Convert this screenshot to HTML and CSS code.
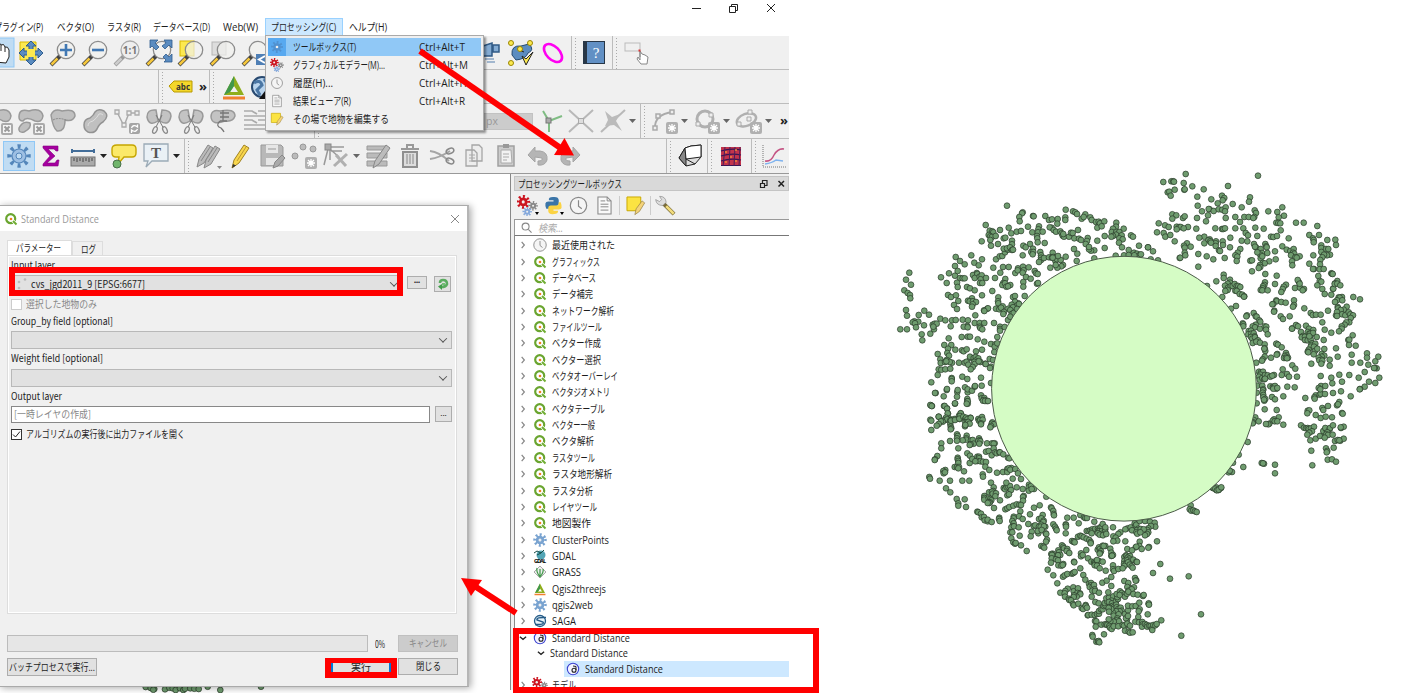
FILE: index.html
```html
<!DOCTYPE html>
<html lang="ja">
<head>
<meta charset="utf-8">
<title>Standard Distance</title>
<link rel="stylesheet" href="styles.css">
</head>
<body>
<svg class="defs" width="0" height="0">
<defs>
<symbol id="hand" viewBox="-16 -16 32 32"><rect x="-16" y="-15" width="31" height="29" fill="#c0dcf3" stroke="#90c8f6"/><path d="M-4 9L-11 0V-5Q-9-6-7-3L-6-1V-9Q-4-12-2-9Q0-12 2-8Q5-10 6-6Q9-7 10-3V4L7 10Z" fill="#fff" stroke="#222"/><path d="M-2-9V-2M2-8V-2M6-6V-1" stroke="#222"/></symbol>
<symbol id="pan" viewBox="-16 -16 32 32"><path d="M-11-11H5V7H-11Z" fill="#fce94f" stroke="#d8b800"/><path d="M0-12 L5-7H2V-2H7V-5L12 0L7 5V2H2V7H5L0 12L-5 7H-2V2H-7V5L-12 0L-7-5V-2H-2V-7H-5Z" fill="#5b8cc0" stroke="#2d5c8e"/><rect x="-4" y="-4" width="8" height="8" fill="#fce94f"/></symbol>
<symbol id="lens" viewBox="-16 -16 32 32"><path d="M-3 3L-12 12" stroke="#444" stroke-width="4"/><path d="M-5.500 5.500L-11.500 11.500" stroke="#f5c73d" stroke-width="2.500"/><circle cx="3" cy="-3" r="8.700" fill="#f1f1ee" fill-opacity=".7" stroke="#8c8c8c" stroke-width="1.300"/></symbol>
<symbol id="zin" viewBox="-16 -16 32 32"><use href="#lens" x="-16" y="-16" width="32" height="32"/><path d="M3-9V3M-3-3H9" stroke="#4178b3" stroke-width="2.600"/></symbol>
<symbol id="zout" viewBox="-16 -16 32 32"><use href="#lens" x="-16" y="-16" width="32" height="32"/><path d="M-3-3H9" stroke="#4178b3" stroke-width="2.600"/></symbol>
<symbol id="z11" viewBox="-16 -16 32 32"><path d="M-3 3L-12 12" stroke="#999" stroke-width="4"/><path d="M-5.500 5.500L-11.500 11.500" stroke="#ccc" stroke-width="2.500"/><circle cx="3" cy="-3" r="9" fill="#eee" stroke="#aaa" stroke-width="1.300"/><text x="3" y="1" text-anchor="middle" font-size="10" font-weight="bold" fill="#777">1:1</text></symbol>
<symbol id="zfull" viewBox="-16 -16 32 32"><use href="#lens" x="-16" y="-16" width="32" height="32"/><path d="M-9-13H-1L-4-10L0-6L-3-3L-7-7L-9-5ZM13-13V-5L10-8L6-4L3-7L7-10L5-13ZM13 9V1L10 4L7 1L4 4L7 7L5 9Z" fill="#5b8cc0" stroke="#2d5c8e" stroke-width=".8"/></symbol>
<symbol id="zsel" viewBox="-16 -16 32 32"><rect x="-11" y="-12" width="14" height="15" fill="#fce94f" stroke="#d8b800"/><use href="#lens" x="-16" y="-16" width="32" height="32"/></symbol>
<symbol id="zlay" viewBox="-16 -16 32 32"><rect x="-11" y="-11" width="14" height="13" fill="#ddd" stroke="#b5b5b5"/><use href="#lens" x="-16" y="-16" width="32" height="32"/></symbol>
<symbol id="zlast" viewBox="-16 -16 32 32"><use href="#lens" x="-16" y="-16" width="32" height="32"/><rect x="1" y="1" width="13" height="11" fill="#4f7fb5"/><path d="M10 3L4 6.500L10 10" stroke="#fff" stroke-width="2" fill="none"/></symbol>
<symbol id="scope" viewBox="-16 -16 32 32"><path d="M-6-7L3-10V3L-6 3ZM4-8H10V-1H4Z" fill="#83abd3" stroke="#315b87" stroke-width="1.500"/><path d="M-4 6H5M-2 9H6" stroke="#547ead"/></symbol>
<symbol id="nodes" viewBox="-16 -16 32 32"><path d="M-9 2Q-10-8 0-7L8-9Q14-3 7 0Q5 6-5 7Z" fill="#5b8cc0" stroke="#23496f"/><path d="M-2-3L3-1" stroke="#222"/><g fill="#fce94f" stroke="#9a8500"><circle cx="-10" cy="-10" r="2.500"/><circle cx="9" cy="-10" r="2.500"/><circle cx="-1" cy="-4" r="2.500"/><circle cx="-10" cy="10" r="2.500"/><path d="M1 3L5 6L12-1L5 12Z" stroke="#222"/></g></symbol>
<symbol id="oval" viewBox="-16 -16 32 32"><ellipse rx="11" ry="6.500" transform="rotate(45)" fill="none" stroke="#ff00f2" stroke-width="2.600"/></symbol>
<symbol id="book" viewBox="-16 -16 32 32"><rect x="-11" y="-12" width="22" height="23" fill="#283747"/><rect x="-7" y="-11" width="17" height="21" fill="#6290c4"/><text x="2" y="5" text-anchor="middle" font-size="15" fill="#fff" class="serif">?</text></symbol>
<symbol id="recthand" viewBox="-16 -16 32 32"><rect x="-10" y="-10" width="15" height="8" fill="none" stroke="#bbb"/><path d="M5-2V4M5-2V7L3 4L2 6L6 11H12L13 4L10 2L7 1Z" fill="#fff" stroke="#888"/><path d="M3.500-3.500h2v2h-2z" fill="#d33"/></symbol>
<symbol id="tag" viewBox="-16 -16 32 32"><path d="M-12-1L-7-6H11V5H-7Z" fill="#f4d72a" stroke="#b99a00"/><text x="2" y="3" text-anchor="middle" font-size="8" font-weight="bold" fill="#333">abc</text></symbol>
<symbol id="tri" viewBox="-16 -16 32 32"><path d="M0-11L10 8H-10ZM0-1L-4 5H4Z" fill="#8fae1d" fill-rule="evenodd"/><path d="M0-11L-10 8L-4 5L0-1Z" fill="#42984a"/><path d="M-11 11H11" stroke="#f08030" stroke-width="3"/></symbol>
<symbol id="globe" viewBox="-16 -16 32 32"><circle r="10" fill="#b9d4ed" stroke="#284970" stroke-width="2"/><path d="M-8-4Q-2-8 0-2L-5 3L-2 8M2-8L8 0" stroke="#4a76a4" stroke-width="3" fill="none"/><path d="M-3 12L6 0L11 12Z" fill="#111"/></symbol>
<symbol id="blobx" viewBox="-16 -16 32 32"><path d="M-12-4Q-12-13-2-10Q10-14 12-5Q11 2 4 0Q-5-5-8 0Q-12 0-12-4ZM-12 7Q-8-1-1 2Q1 7-7 11Q-13 12-12 7Z" fill="#c0c0c0" stroke="#999" stroke-width="1.500"/><rect x="3" y="3" width="10" height="10" rx="1" fill="#f5f5f5" stroke="#aaa" stroke-width="2"/><path d="M5.500 5.500L10.500 10.500M10.500 5.500L5.500 10.500" stroke="#999" stroke-width="2"/></symbol>
<symbol id="blob2" viewBox="-16 -16 32 32"><path d="M-12-6Q-9-13-1-10Q12-13 12-5Q10 1 2-1Q2 11-6 10Q-10 7-12-6Z" fill="#c0c0c0" stroke="#999" stroke-width="1.500"/><path d="M-10-1Q-5-4 3-1" stroke="#888" stroke-dasharray="2 1" fill="none"/></symbol>
<symbol id="bean" viewBox="-16 -16 32 32"><path d="M-11 4Q-11-2-5-3Q-1-6 0-9Q3-13 9-10Q15-5 8 1Q4 3 2 8Q-1 13-7 11Q-11 9-11 4Z" fill="#c0c0c0" stroke="#929292" stroke-width="1.500"/><path d="M-7 5Q-7 1-2 0Q2-3 4-7Q6-8 8-6" stroke="#dedede" fill="none"/></symbol>
<symbol id="vnode" viewBox="-16 -16 32 32"><path d="M-10-9L-3 5L2-8H11" stroke="#aaa" stroke-width="1.500" fill="none"/><g fill="#eee" stroke="#aaa" stroke-width="1.300"><path d="M-12-11h4v4h-4zM-5 2h4v4h-4zM0-10h4v4h-4zM8-10h4v4h-4z"/></g><rect x="2" y="2" width="11" height="11" rx="2" fill="#a5a5a5"/><path d="M4.500 7Q6 3 10.500 6V3.500M10.500 8Q9 12 4.500 9V12" stroke="#fff" stroke-width="1.300" fill="none"/></symbol>
<symbol id="split" viewBox="-16 -16 32 32"><path d="M-12-4Q-12-12-3-11L-1 0Q-10 6-12-4ZM12-5Q12-11 3-11L1 0Q10 6 12-5Z" fill="#c3c3c3" stroke="#999" stroke-width="1.500"/><path d="M-3-6L5 8M3-6L-4 8" stroke="#777"/><ellipse cx="-4" cy="9" rx="2" ry="3.500" fill="#eee" stroke="#888" stroke-width="1.300" transform="rotate(25 -4 9)"/><ellipse cx="6" cy="9" rx="2" ry="3.500" fill="#eee" stroke="#888" stroke-width="1.300" transform="rotate(-25 6 9)"/></symbol>
<symbol id="merge" viewBox="-16 -16 32 32"><path d="M-12-4Q-12-12-3-10Q12-13 12-5Q10 1 2 0Q-11 5-12-4Z" fill="#c3c3c3" stroke="#999" stroke-width="1.500"/><path d="M-3-8H6M-3-4H6M-3 0H4M0-11V0M-3 0Q-8 5-2 7Q0 9 1 11" stroke="#777" fill="none" stroke-width="1.300"/></symbol>
<symbol id="cut3" viewBox="-16 -16 32 32"><path d="M-11-10H-3L2-7M3-10H12M-11-5H12M-11-1H-3L2 2M3-1H12M-11 4H12M-11 8H12" stroke="#aaa" stroke-width="1.700" fill="none"/></symbol>
<symbol id="red" viewBox="-16 -16 32 32"><circle r="10" fill="#b00010"/></symbol>
<symbol id="topo" viewBox="-16 -16 32 32"><path d="M-6-10L0 0L13-5M0 0V11" stroke="#80bd84" stroke-width="2" fill="none"/><rect x="-3" y="-3" width="5" height="5" fill="#aaa" stroke="#777"/></symbol>
<symbol id="cross" viewBox="-16 -16 32 32"><path d="M-12-11L12 11M12-11L-12 11" stroke="#b8b8b8" stroke-width="2"/><rect x="-2.500" y="-2.500" width="5" height="5" fill="#ddd" stroke="#aaa"/></symbol>
<symbol id="cross2" viewBox="-16 -16 32 32"><path d="M-12 11L12-11" stroke="#b8b8b8" stroke-width="2" fill="none"/><path d="M-8-10L-1-4L7-7L3 0L9 10L1 4L-8 5L-5-1Z" fill="#bbb"/></symbol>
<symbol id="star" viewBox="-16 -16 32 32"><rect x="1" y="1" width="12" height="12" rx="2" fill="#b0b0b0"/><path d="M7 3V11M3 7H11M4 4L10 10M10 4L4 10" stroke="#fff" stroke-width="1.300"/></symbol>
<symbol id="curve" viewBox="-16 -16 32 32"><path d="M-10 8Q-11-7 8-9" stroke="#aaa" stroke-width="1.800" fill="none"/><path d="M-12 5h4v4h-4zM-9-7h4v4h-4zM5-11h4v4h-4z" fill="#eee" stroke="#aaa" stroke-width="1.500"/><use href="#star" x="-16" y="-16" width="32" height="32"/></symbol>
<symbol id="ring" viewBox="-16 -16 32 32"><circle cx="-2" cy="-2" r="8" fill="none" stroke="#b0b0b0" stroke-width="3"/><path d="M-11 1h4v4h-4zM2-8h4v4h-4z" fill="#eee" stroke="#aaa"/><use href="#star" x="-16" y="-16" width="32" height="32"/></symbol>
<symbol id="ellip" viewBox="-16 -16 32 32"><ellipse cx="-2" cy="-2" rx="10" ry="6" fill="none" stroke="#b0b0b0" stroke-width="2.500" transform="rotate(-20)"/><path d="M-12 1h4v4h-4zM-2-4h4v4h-4zM-1-11h4v4h-4z" fill="#eee" stroke="#aaa"/><use href="#star" x="-16" y="-16" width="32" height="32"/></symbol>
<symbol id="gear" viewBox="-16 -16 32 32"><circle r="10" fill="none" stroke="currentColor" stroke-width="7" stroke-dasharray="3.600 4.254" transform="rotate(-10)"/><circle r="8.500" fill="currentColor"/><circle r="3" class="hole"/></symbol>
<symbol id="geartool" viewBox="-16 -16 32 32"><rect x="-15.500" y="-14.500" width="31" height="29" fill="#c0dcf3" stroke="#90c8f6"/><circle r="9.500" fill="none" stroke="#5486ba" stroke-width="4.500" stroke-dasharray="3 4.461" transform="rotate(-10)"/><circle r="7" fill="#9dbfe3" stroke="#5486ba" stroke-width="1.200"/><circle r="3" fill="#c0dcf3" stroke="#5486ba"/></symbol>
<symbol id="sigma" viewBox="-16 -16 32 32"><path d="M-8-10H7V-5H5L3-7H-3L4 0L-4 7H4L6 4H8L7 10H-8V8L-1 0L-8-8Z" fill="#a5009f" stroke="#850082" stroke-width=".6"/></symbol>
<symbol id="ruler" viewBox="-16 -16 32 32"><path d="M-11-5H11M-11-7V-3M11-7V-3" stroke="#426d99" stroke-width="2"/><rect x="-12" y="1" width="24" height="9" fill="#aaa" stroke="#707070"/><path d="M-9 2V5M-6 2V6M-3 2V5M0 2V6M3 2V5M6 2V6M9 2V5" stroke="#444"/></symbol>
<symbol id="tip" viewBox="-16 -16 32 32"><path d="M-7-11H8Q12-11 12-7V-3Q12 1 8 1H0L-6 8L-5 1H-8Q-12 1-12-3V-7Q-12-11-7-11Z" fill="#fbe969" stroke="#c5a500" stroke-width="1.400"/><circle cx="-7" cy="8" r="4" fill="#70b56c" stroke="#48704a"/></symbol>
<symbol id="textbox" viewBox="-16 -16 32 32"><path d="M-12-12H12V5H-4L-10 11L-8 5H-12Z" fill="#eaf1f6" stroke="#9baab6" stroke-width="1.300"/><text y="2" text-anchor="middle" font-size="15" font-weight="bold" class="serif" fill="#555">T</text></symbol>
<symbol id="pencils" viewBox="-16 -16 32 32"><g fill="#bbb" stroke="#888"><path d="M-11 11L-9 3L0-11L5-8L-4 7Z"/><path d="M-4 12L-2 4L7-10L12-7L3 8Z"/></g><path d="M-7 5L2-9M0 6L9-8" stroke="#888"/><path d="M9 10h5l-2.500 3z" fill="#888"/></symbol>
<symbol id="pencil" viewBox="-16 -16 32 32"><path d="M-8 12L-6 4L4-11L9-8L-1 7Z" fill="#f8d64c" stroke="#a08222"/><path d="M-3 5L6-9" stroke="#bc9934"/><path d="M-8 12L-7 8L-4 9.500Z" fill="#333"/></symbol>
<symbol id="gpencil" viewBox="-16 -16 32 32"><path d="M-5 12L-3 5L8-11L12-8L1 8Z" fill="#bcbcbc" stroke="#888"/></symbol>
<symbol id="save" viewBox="-16 -16 32 32"><path d="M-11-11H9L11-9V10H-11Z" fill="#b8b8b8" stroke="#999"/><path d="M-6-11H6V-3H-6ZM-6 2H6V9H-6Z" fill="#e6e6e6"/><path d="M-4-7H4" stroke="#999"/><path d="M1 12L3 6L10-1L13 2L6 10Z" fill="#aaa" stroke="#888"/></symbol>
<symbol id="points" viewBox="-16 -16 32 32"><g fill="#bbb" stroke="#999"><circle cx="-1" cy="-9" r="3"/><circle cx="-9" cy="0" r="3"/><circle cx="9" cy="-7" r="3"/></g><use href="#star" x="-16" y="-16" width="32" height="32"/></symbol>
<symbol id="vertex" viewBox="-16 -16 32 32"><path d="M-9-9H8M-5-5H6M-8-7L-12 9M-6-7V4M-5-6L3 1" stroke="#999" stroke-width="1.500"/><rect x="-11" y="-12" width="6" height="6" fill="#aaa" stroke="#888"/><path d="M-2 10L11-2M0-1L10 10" stroke="#b0b0b0" stroke-width="3"/></symbol>
<symbol id="table" viewBox="-16 -16 32 32"><path d="M-11-10H9V-6H-11ZM-11-3H9V2H-11ZM-11 5H9V10H-11Z" fill="#bbb" stroke="#999"/><use href="#gpencil" x="-16" y="-16" width="32" height="32"/></symbol>
<symbol id="trash" viewBox="-16 -16 32 32"><path d="M-9-7H9M-3-8V-11H3V-8" stroke="#999" stroke-width="2" fill="none"/><path d="M-7-4H7V11H-7Z" fill="#ddd" stroke="#8f8f8f" stroke-width="2"/><path d="M-3-2V8M0-2V8M3-2V8" stroke="#888"/></symbol>
<symbol id="sciss" viewBox="-16 -16 32 32"><path d="M-12-5Q-3-4 7 5M-12 3Q-3 2 8-5" stroke="#a5a5a5" stroke-width="2" fill="none"/><ellipse cx="8" cy="-5" rx="4" ry="2.500" transform="rotate(-25 8 -5)" fill="none" stroke="#888" stroke-width="1.500"/><ellipse cx="8" cy="5" rx="4" ry="2.500" transform="rotate(25 8 5)" fill="none" stroke="#888" stroke-width="1.500"/></symbol>
<symbol id="copy" viewBox="-16 -16 32 32"><path d="M-2-11H5L8-8V5H-2ZM-8-6H0L3-3V10H-8Z" fill="#ededed" stroke="#a5a5a5" stroke-width="1.300"/><path d="M-5-1H1M-5 2H1M-5 5H1" stroke="#aaa"/></symbol>
<symbol id="paste" viewBox="-16 -16 32 32"><path d="M-8-10H8V10H-8Z" fill="#ccc" stroke="#a0a0a0" stroke-width="1.500"/><path d="M-5-6H5L6 7H-5Z" fill="#f2f2f2" stroke="#aaa"/><path d="M-3-12H3V-8H-3Z" fill="#999"/><path d="M-3-2H3M-3 1H3M-3 4H1" stroke="#aaa"/></symbol>
<symbol id="undo" viewBox="-16 -16 32 32"><path d="M-10-1L-3-9V-5H2Q10-4 9 4Q7 10 0 9V5Q5 5 4 2L-3 1V6Z" fill="#b5b5b5" stroke="#a5a5a5"/></symbol>
<symbol id="redo" viewBox="-16 -16 32 32"><path d="M10-1L3-9V-5H-2Q-10-4-9 4Q-7 10 0 9V5Q-5 5-4 2L3 1V6Z" fill="#b5b5b5" stroke="#a5a5a5"/></symbol>
<symbol id="cube" viewBox="-16 -16 32 32"><path d="M-5-8L1-10L11-11V1L5 8L-4 10L-11 2Z" fill="#ddd" stroke="#222"/><path d="M-5-8L-4 3L-4 10L-11 2Z" fill="#888" stroke="#222"/><path d="M-5-8L1-10L11-11V1L-4 3Z" fill="#fff" stroke="#222"/><path d="M-4 3L5 8" stroke="#222"/></symbol>
<symbol id="raster" viewBox="-16 -16 32 32"><rect x="-10" y="-9" width="20" height="19" fill="#c2334c"/><path d="M-10-5Q0-8 10-6M-10 0Q0-3 10-1M-10 5Q0 2 10 4M-10 9.500H10" stroke="#3a1454" stroke-width="1.200" fill="none"/><path d="M-6-9L-8 10M-1-9L-2 10M4-9L3 10M9-9L8 10" stroke="#47205a"/><path d="M-5-5V-3M0 0V2M5-7V-5M-5 5V7M5 4V6" stroke="#f18b36" stroke-width="1.500"/></symbol>
<symbol id="chart" viewBox="-16 -16 32 32"><path d="M-11-11V11H12" stroke="#777" stroke-dasharray="1 1" fill="none"/><path d="M-9 5Q-3 6 0-1Q4-8 10-7" stroke="#c45484" stroke-width="1.500" fill="none"/><path d="M-9 8Q-2 7 2 4L9 5" stroke="#7eb3ef" stroke-width="1.500" fill="none"/></symbol>
<symbol id="q" viewBox="-8 -8 16 16"><circle cx="-.3" cy="-.3" r="4.500" fill="none" stroke="#6aa52f" stroke-width="2.200"/><path d="M1.500 1.500L5.500 5.500" stroke="#fff" stroke-width="3.200"/><path d="M2 2L5.500 5.500" stroke="#70ae32" stroke-width="1.900"/><circle r="1.300" fill="#ed7f22"/></symbol>
<symbol id="clock" viewBox="-16 -16 32 32"><circle r="12.500" fill="#f5f5f5" stroke="#888" stroke-width="1.800"/><path d="M0-8V1L5 5" stroke="#888" stroke-width="1.800" fill="none"/></symbol>
<symbol id="doc" viewBox="-16 -16 32 32"><path d="M-10-13H4L10-7V13H-10Z" fill="#f9f9f9" stroke="#888" stroke-width="1.600"/><path d="M4-13V-7H10M-6-7H1M-6-2H6M-6 2H6M-6 7H6" stroke="#888" stroke-width="1.500" fill="none"/></symbol>
<symbol id="note" viewBox="-16 -16 32 32"><path d="M-13-13H8V4L3 8H-13Z" fill="#fbe342" stroke="#caa900" stroke-width="1.500"/><path d="M-1 14L1 5L10-7L14-4L6 9Z" fill="#f4d37a" stroke="#8e7a40"/></symbol>
<symbol id="gears" viewBox="-16 -16 32 32"><g color="#cc1520"><use href="#gear" x="-19" y="-18" width="25" height="25"/></g><g color="#888"><use href="#gear" x="0" y="-8" width="17" height="17"/></g><g color="#85a9dc"><use href="#gear" x="-9" y="1" width="17" height="17"/></g></symbol>
<symbol id="py" viewBox="-16 -16 32 32"><path d="M-1-13Q8-14 8-8V-2Q8 1 4 1H-4Q-7 1-7 5H-11Q-15-6-8-6H0V-8H-7Q-8-13-1-13Z" fill="#3b75a8"/><path d="M1 13Q-8 14-8 8V4Q-8 0-4 0H4Q8 0 8-5H11Q15 6 8 6H0V8H7Q7 13 1 13Z" fill="#fbd343"/></symbol>
<symbol id="wrench" viewBox="-16 -16 32 32"><path d="M-3-3L13 13" stroke="#786b38" stroke-width="6"/><path d="M1 1L12.500 12.500" stroke="#f2dc7c" stroke-width="4"/><path d="M-15-9L-9-6L-6-9L-9-14Q0-14 1-5L-4 0Q-14 0-15-9Z" fill="#ddd" stroke="#888"/></symbol>
<symbol id="gdal" viewBox="-8 -8 16 16"><circle cx="1" cy="-1" r="4.500" fill="#52a5b5"/><path d="M-6-3L-3-5L1-3L4-6M-3-1L1-3" stroke="#174b47" fill="none"/><text y="6.500" text-anchor="middle" font-size="5.500" font-weight="bold" textLength="12">GDAL</text></symbol>
<symbol id="grass" viewBox="-8 -8 16 16"><path d="M0-6L6 0L0 6L-6 0Z" fill="#eee" stroke="#aaa"/><path d="M0 5Q-4 0-3-4M0 5V-3M0 5Q4 0 3-3" stroke="#3c9645" stroke-width="1.200" fill="none"/></symbol>
<symbol id="saga" viewBox="-8 -8 16 16"><circle r="5.500" fill="#e8f3fa" stroke="#245b87" stroke-width="1.300"/><path d="M6-3.500Q-4-4-3-1L3 1Q5 4-5 3.500" stroke="#245b87" stroke-width="1.400" fill="none"/></symbol>
<symbol id="sd" viewBox="-8 -8 16 16"><circle r="5.700" fill="#f4f4ff" stroke="#3b42cf" stroke-width="1.100"/><circle cx="1" cy="1.200" r="2" fill="none" stroke="#222" stroke-width="1.100"/><path d="M0-3L3-2.500V1" stroke="#222" fill="none"/></symbol>
</defs>
</svg>

<div class="page">
<div class="app">
  <div class="titlebar">
    <svg width="100" height="16" viewBox="0 0 100 16" fill="none" stroke="#222"><path d="M6 8.500H15M43.500 6.500H49.500V12.500H43.500ZM45.500 6V4.500H51.500V10.500H50M81 4L89 12M89 4L81 12"/></svg>
  </div>
  <div class="menubar">
    <span class="m1"><b data-w="49">プラグイン(P)</b></span><span class="m2"><b data-w="37">ベクタ(O)</b></span><span class="m3"><b data-w="34">ラスタ(R)</b></span><span class="m4"><b data-w="57">データベース(D)</b></span><span class="m5"><b data-w="35">Web(W)</b></span><span class="m6 open"><b data-w="65">プロセッシング(C)</b></span><span class="m7"><b data-w="38">ヘルプ(H)</b></span>
  </div>
  <div class="bar row1">
    <svg class="ic"><use href="#hand"/></svg><svg class="ic"><use href="#pan"/></svg><svg class="ic"><use href="#zin"/></svg><svg class="ic"><use href="#zout"/></svg><svg class="ic"><use href="#z11"/></svg><svg class="ic"><use href="#zfull"/></svg><svg class="ic"><use href="#zsel"/></svg><svg class="ic"><use href="#zlay"/></svg><svg class="ic"><use href="#zlast"/></svg>
    <svg class="ic after-menu"><use href="#scope"/></svg><svg class="ic"><use href="#nodes"/></svg><svg class="ic"><use href="#oval"/></svg><i class="sep g2"></i><svg class="ic"><use href="#book"/></svg><i class="sep g2"></i><svg class="ic"><use href="#recthand"/></svg>
  </div>
  <div class="bar row2">
    <i class="sep"></i><svg class="ic"><use href="#tag"/></svg><span class="more">»</span><i class="sep"></i><svg class="ic g2"><use href="#tri"/></svg><svg class="ic tight"><use href="#globe"/></svg>
  </div>
  <div class="bar row3">
    <svg class="ic"><use href="#blobx"/></svg><svg class="ic"><use href="#blobx"/></svg><svg class="ic"><use href="#blob2"/></svg><svg class="ic"><use href="#bean"/></svg><svg class="ic"><use href="#vnode"/></svg><svg class="ic"><use href="#split"/></svg><svg class="ic"><use href="#split"/></svg><svg class="ic"><use href="#merge"/></svg><svg class="ic"><use href="#cut3"/></svg>
    <i class="sep snap"></i><svg class="ic g3"><use href="#red"/></svg><span class="px">px</span><svg class="ic"><use href="#topo"/></svg><svg class="ic"><use href="#cross"/></svg><svg class="ic"><use href="#cross2"/></svg><i class="dd dim"></i><i class="sep g3"></i><svg class="ic g2"><use href="#curve"/></svg><i class="dd dim"></i><svg class="ic g2"><use href="#ring"/></svg><i class="dd dim"></i><svg class="ic g2"><use href="#ellip"/></svg><i class="dd dim"></i><span class="more end">»</span>
  </div>
  <div class="bar row4">
    <svg class="ic"><use href="#geartool"/></svg><svg class="ic"><use href="#sigma"/></svg><svg class="ic"><use href="#ruler"/></svg><i class="dd g1"></i><svg class="ic"><use href="#tip"/></svg><svg class="ic"><use href="#textbox"/></svg><i class="dd g1"></i><i class="sep g3"></i><svg class="ic g1"><use href="#pencils"/></svg><svg class="ic"><use href="#pencil"/></svg><svg class="ic"><use href="#save"/></svg><svg class="ic"><use href="#points"/></svg><svg class="ic"><use href="#vertex"/></svg><i class="dd dim g1"></i><svg class="ic g1"><use href="#table"/></svg><svg class="ic"><use href="#trash"/></svg><svg class="ic"><use href="#sciss"/></svg><svg class="ic"><use href="#copy"/></svg><svg class="ic"><use href="#paste"/></svg><svg class="ic"><use href="#undo"/></svg><svg class="ic"><use href="#redo"/></svg><i class="sep far"></i><svg class="ic g1"><use href="#cube"/></svg><i class="sep g1"></i><svg class="ic g1"><use href="#raster"/></svg><i class="sep g4"></i><svg class="ic"><use href="#chart"/></svg>
  </div>
  <div class="work">
    <div class="canvas"></div>
    <div class="dock">
      <div class="docktitle"><b data-w="104">プロセッシングツールボックス</b><svg width="30" height="12" viewBox="0 0 30 12" fill="none" stroke="#222"><path d="M2.500 5.500H6.500V9.500H2.500ZM4.500 5V2.500H9V7.500H7" stroke-width="1.200"/><path d="M20.500 3L26 8.500M26 3L20.500 8.500" stroke-width="1.500"/></svg></div>
      <div class="docktools">
        <span class="tool has"><svg><use href="#gears"/></svg></span><span class="tool has"><svg><use href="#py"/></svg></span><span class="tool"><svg><use href="#clock"/></svg></span><span class="tool"><svg><use href="#doc"/></svg></span><i></i><span class="tool"><svg><use href="#note"/></svg></span><i></i><span class="tool"><svg><use href="#wrench"/></svg></span>
      </div>
      <div class="search"><svg width="11" height="11" viewBox="0 0 12 12" fill="none" stroke="#888" stroke-width="1.200"><circle cx="5" cy="5" r="3.800"/><path d="M8 8L11.500 11.500"/></svg><b data-w="25">検索...</b></div>
      <div class="tree" id="tree"></div>
    </div>
  </div>
</div>

<svg class="map" id="map" width="1420" height="693" viewBox="0 0 1420 693"></svg>

<div class="popup">
  <div class="mi on"><svg><use href="#gear"/></svg><span class="lab"><b data-w="63">ツールボックス(T)</b></span><span><b data-w="46">Ctrl+Alt+T</b></span></div>
  <div class="mi"><svg><use href="#gears"/></svg><span class="lab"><b data-w="92">グラフィカルモデラー(M)...</b></span><span><b data-w="49">Ctrl+Alt+M</b></span></div>
  <div class="mi"><svg><use href="#clock"/></svg><span class="lab"><b data-w="40">履歴(H)...</b></span><span><b data-w="48">Ctrl+Alt+H</b></span></div>
  <div class="mi"><svg><use href="#doc"/></svg><span class="lab"><b data-w="58">結果ビューア(R)</b></span><span><b data-w="46">Ctrl+Alt+R</b></span></div>
  <div class="mi"><svg><use href="#note"/></svg><span class="lab"><b data-w="96">その場で地物を編集する</b></span></div>
</div>

<div class="dialog">
  <div class="dtitle"><svg width="16" height="16"><use href="#q"/></svg><b data-w="78">Standard Distance</b><svg class="x" width="10" height="10" viewBox="0 0 10 10" stroke="#888"><path d="M1 1L9 9M9 1L1 9"/></svg></div>
  <div class="tabs"><span class="tab cur"><b data-w="45">パラメーター</b></span><span class="tab"><b data-w="15">ログ</b></span></div>
  <div class="pane">
    <div class="label first"><b data-w="44">Input layer</b></div>
    <div class="line in"><div class="combo layer"><svg width="12" height="14" viewBox="0 0 12 14" fill="#bbb"><circle cx="2" cy="5" r="1.300"/><circle cx="8" cy="2.500" r="1.300"/><circle cx="2" cy="11" r="1.300"/></svg><b data-w="114">cvs_jgd2011_9 [EPSG:6677]</b><i class="chev"></i></div><span class="btn dots">•••</span><span class="btn loop"><svg width="12" height="12" viewBox="0 0 12 12"><path d="M3 5Q3 2 6 2Q10 2 10 6Q9 9 4 9" fill="none" stroke="#5aac5f" stroke-width="2.600"/><path d="M5 6V12L1 8.500Z" fill="#419c4a"/><path d="M5 6H8" stroke="#72bf75" stroke-width="2"/></svg></span></div>
    <div class="check off"><i></i><b data-w="71">選択した地物のみ</b></div>
    <div class="label group"><b data-w="102">Group_by field [optional]</b></div>
    <div class="combo"><i class="chev"></i></div>
    <div class="label"><b data-w="92">Weight field [optional]</b></div>
    <div class="combo"><i class="chev"></i></div>
    <div class="label"><b data-w="51">Output layer</b></div>
    <div class="line out"><div class="input"><b data-w="77">[一時レイヤの作成]</b></div><span class="btn small">...</span></div>
    <div class="check"><i><svg width="9" height="9" viewBox="0 0 9 9" fill="none" stroke="#222"><path d="M1 4.500L3.500 7L8 1.500"/></svg></i><b data-w="159">アルゴリズムの実行後に出力ファイルを開く</b></div>
  </div>
  <div class="prog"><div class="track"></div><span><b data-w="10">0%</b></span><div class="btn wide gone"><b data-w="38">キャンセル</b></div></div>
  <div class="foot"><div class="btn batch"><b data-w="86">バッチプロセスで実行...</b></div><div class="btn wide run"><b data-w="20">実行</b></div><div class="btn wide"><b data-w="25">閉じる</b></div></div>
</div>

<div class="mark mark-layer"></div>
<div class="mark mark-run"></div>
<div class="mark mark-tree"></div>
<svg class="arrows" width="1420" height="693" viewBox="0 0 1420 693"><g stroke="#f00" stroke-width="6"><path d="M420 51L562 149"/><path d="M516 613L473 585"/></g><g fill="#f00"><path d="M574 155.500L554 155L564.500 138Z"/><path d="M461 578L482 580L471 596Z"/></g></svg>
</div>
<script src="app.js"></script>
</body>
</html>
```
FILE: styles.css
```css
*{box-sizing:border-box}
body{margin:0;background:#fff;font-family:"Open Sans","Noto Sans CJK JP",sans-serif;font-size:10.5px;color:#1c1c1c}
b{font-weight:inherit;display:inline-block;white-space:nowrap;transform-origin:0 50%}
i{font-style:normal;flex:none}
svg{flex:none;overflow:hidden}
.serif{font-family:"Liberation Serif",serif}
.hole{fill:#f0f0f0}
.defs{position:absolute}
.page{position:relative;width:1420px;height:693px;overflow:hidden}
.app{width:789px;height:690px;overflow:hidden;display:flex;flex-direction:column}
.titlebar{height:18px;display:flex;padding-left:686px;flex:none}
.menubar{height:18px;display:flex;flex:none;line-height:18px}
.menubar span{height:18px;flex:none}
.m1{width:57px;margin-left:-6px}
.m2{width:50px;padding-left:6px}
.m3{width:46px;padding-left:6px}
.m4{width:70px;padding-left:6px}
.m5{width:48px;padding-left:6px}
.m6{width:78px;padding-left:6px}
.m7{width:60px;padding-left:6px}
.menubar .open{background:#cce8ff;border:1px solid #99d1ff;line-height:17px;padding-left:5px}
.bar{height:34px;background:#f0f0f0;border-bottom:1px solid #bdbdbd;display:flex;align-items:center;flex:none;overflow:hidden}
.bar>*{flex:none}
.row3{height:35px}
.row4{height:35px;padding-left:3px;border-bottom:1px solid #999}
.row1>:first-child,.row3>:first-child{margin-left:-17px}
.row2{padding-left:158px}
.ic{width:32px;height:32px}
.after-menu{margin-left:202px}
.sep{width:7px;height:100%;border-left:1px solid #bcbcbc;background:radial-gradient(circle,#aaa 0 .7px,transparent 1px) 2px 4px/3px 3px repeat-y}
.g1{margin-left:1px}.g2{margin-left:2px}.g3{margin-left:3px}.g4{margin-left:4px}
.snap{margin-left:43px}.far{margin-left:80px}
.tight{margin-left:-4px}
.more{width:12px;text-align:center;font-size:13px;font-weight:bold;color:#222;line-height:20px;padding-bottom:2px}
.end{margin-left:5px}
.dd{width:7px;height:4px;margin-right:1px;background:#222;clip-path:polygon(0 0,100% 0,50% 100%)}
.dim{background:#666}
.px{width:50px;height:17px;margin-left:127px;background:#ccc;border:1px solid #c2c2c2;color:#999;padding-left:2px;line-height:14px}
.work{display:flex;flex:1;min-height:0;background:#f0f0f0}
.canvas{width:511px;background:#fff;border-right:1px solid #888;flex:none}
.dock{width:275px;margin-left:3px;display:flex;flex-direction:column}
.docktitle{height:15px;margin-top:2px;background:#d9d9d9;border:1px solid #c4c4c4;display:flex;align-items:center;justify-content:space-between;padding-left:3px;line-height:12px;flex:none}
.docktools{height:28px;display:flex;align-items:center;padding-left:1px;flex:none}
.tool{width:25.6px;display:flex;justify-content:center;position:relative}
.tool svg{width:21px;height:21px}
.tool.has::after{content:"";position:absolute;right:2px;bottom:1px;border:2.5px solid transparent;border-top:3px solid #000;border-bottom:0}
.docktools i{width:1px;height:19px;background:#ccc;margin:0 2px}
.search{height:17px;background:#fff;border:1px solid #999;border-bottom-color:#777;border-right:0;display:flex;align-items:center;gap:6px;padding-left:6px;color:#aaa;font-style:italic;line-height:14px;flex:none}
.tree{flex:1;background:#fff;border-left:1px solid #888;overflow:hidden;padding-top:1px}
.item{height:16.37px;display:flex;align-items:center;padding-left:4px;line-height:16px}
.item .tw{width:8px;height:8px;margin-right:5px}
.item .ti{width:16px;height:16px;margin-right:4px;color:#79a3d0}
.item .hole{fill:#fff}
.kid{height:15px;padding-left:22px}
.leaf{height:16px;margin-left:49px;padding-left:1px;background:#cde8ff}
.map,.arrows{position:absolute;left:0;top:0}
.popup{position:absolute;left:265px;top:35px;width:219px;height:96px;background:#f0f0f0;border:1px solid #aaa;padding:2px;box-shadow:2px 2px 2px #0006}
.mi{height:18px;display:flex;align-items:center;line-height:17px}
.mi svg{width:18px;height:18px;padding:2px;color:#8bb5df}
.mi .lab{width:133px;padding-left:7px;flex:none}
.mi.on{background:#90c8f6}
.mi.on svg{background:#58a9f0;color:#5191d0}
.dialog{position:absolute;left:-1px;top:205px;width:470px;height:482px;background:#f0f0f0;border:1px solid #aaa;border-right:2px solid #b5b5b5;box-shadow:2px 1px 7px #0005;font-family:"Noto Sans CJK JP",sans-serif;font-size:10px}
.dtitle{height:25px;background:#fff;display:flex;align-items:center;padding-left:3px;color:#999;font-family:"Open Sans",sans-serif;font-size:10.5px}
.dtitle>b{margin-left:2px;width:90px}
.x{margin-left:339px}
.tabs{height:24px;padding:9px 0 0 7px;display:flex}
.tab{width:31px;height:15px;margin-top:1px;border:1px solid #ddd;border-bottom:0;padding-left:8px;line-height:14px}
.tab.cur{width:65px;height:16px;margin-top:0;background:#fff}
.pane{margin-left:7px;width:450px;height:359px;border:2px solid #fff;outline:1px solid #ddd;outline-offset:-1px;padding:0 2px}
.label{height:19.5px;line-height:17px}
.label.first{height:17px;line-height:16px}
.label.group{height:20px;line-height:19px}
.combo{height:18px;width:441px;background:#e1e1e1;border:1px solid #b8b8b8;display:flex;align-items:center;padding-right:5px}
.chev{width:6px;height:6px;margin-left:auto;border:solid #555;border-width:0 1px 1px 0;transform:rotate(45deg) translate(-1px,-1px)}
.layer{width:389px;padding-left:5px;height:17px;padding-right:2px;line-height:14px}
.layer b{margin-left:2px}
.line{display:flex}
.in{height:25px;padding-top:1px}
.btn{background:#e1e1e1;border:1px solid #adadad;text-align:center;flex:none}
.dots{width:20px;height:13px;margin:1px 0 0 7px;font-size:6px;line-height:9px}
.loop{width:17px;height:16px;margin:1px 0 0 7px;line-height:0;padding-top:1px}
.check{height:12px;display:flex;align-items:center;gap:4px;line-height:12px}
.in+.check{margin-top:-1px;margin-bottom:1px}
.check i{width:11px;height:11px;border:1px solid #333;background:#fff;line-height:0}
.check.off{color:#888}
.check.off i{border-color:#ccc}
.input{width:419px;height:17px;border:1px solid #888;background:#fff;color:#888;padding-left:2px;line-height:14px}
.out{height:22px}
.small{width:17px;height:16px;margin-left:5px;line-height:12px;font-size:8px}
.prog{display:flex;margin:20px 0 0 7px;height:18px}
.track{width:361px;height:17px;background:#e6e6e6;border:1px solid #bcbcbc;margin-top:1px}
.prog>span{width:30px;padding:2px 0 0 7px}
.wide{width:60px;height:17px;line-height:14px;display:flex;justify-content:center}
.gone{background:#ccc;border-color:#c0c0c0;color:#888;margin-top:1px}
.foot{display:flex;padding:6px 0 0 7px}
.batch{width:90px;height:18px;line-height:15px;text-align:left;padding-left:1px;margin-right:234px}
.run{border:2px solid #0078d7;margin-right:7px;line-height:13px}
.mark{position:absolute;border:6px solid #f00}
.mark-layer{left:9px;top:267px;width:394px;height:29px}
.mark-run{left:325px;top:658px;width:72px;height:20px;border-width:5px 6px 6px}
.mark-tree{left:513px;top:628px;width:306px;height:65px}
```
FILE: app.js
```js
const items = [
  ['clock','最近使用された',63],['q','グラフィックス',48],['q','データベース',44],['q','データ補完',41],
  ['q','ネットワーク解析',62],['q','ファイルツール',50],['q','ベクター作成',49],['q','ベクター選択',49],
  ['q','ベクタオーバーレイ',66],['q','ベクタジオメトリ',58],['q','ベクタテーブル',53],['q','ベクター一般',43],
  ['q','ベクタ解析',42],['q','ラスタツール',43],['q','ラスタ地形解析',60],['q','ラスタ分析',41],
  ['q','レイヤツール',45],['q','地図製作',39],['gear','ClusterPoints',57],['gdal','GDAL',24],
  ['grass','GRASS',29],['tri','Qgis2threejs',54],['gear','qgis2web',41],['saga','SAGA',24],
  ['sd','Standard Distance',78,'open'],[null,'Standard Distance',78,'open','kid'],
  ['sd','Standard Distance',78,null,'leaf'],['gears','モデル',24]
];
const twist = open => `<svg class="tw" viewBox="0 0 9 9" fill="none" stroke="${open ? '#222' : '#888'}" stroke-width="1.4"><path d="${open ? 'M1 3L4.500 6L8 3' : 'M3 1L6 4.500L3 8'}"/></svg>`;
document.getElementById('tree').innerHTML = items.map(([icon, text, w, state, cls]) =>
  `<div class="item ${cls || ''}">${cls === 'leaf' ? '' : twist(state)}` +
  `${icon ? `<svg class="ti"><use href="#${icon}"/></svg>` : ''}<b data-w="${w}">${text}</b></div>`).join('');

// Condense each label to the width of the UI font
for (const el of document.querySelectorAll('b[data-w]')) {
  const r = document.createRange();
  r.selectNodeContents(el);
  const w = +el.dataset.w;
  el.style.transform = `scaleX(${w / r.getBoundingClientRect().width})`;
  if (el.closest('.btn')) el.style.width = w + 'px';
}

// Store locations, three units per pixel, grouped by map tile [x, y, points]
const tiles = [
[880,160,`381,137 428,157 426,160 418,171 419,184 459,168 461,169 496,168 507,180 516,178 533,177 556,172 556,180 532,191 557,149 579,154 586,157 591,162 616,163 605,176 611,171 631,172 635,180 648,186 656,185 660,190 673,184 652,203 665,199 709,188 708,200 699,206 731,206 317,195 329,212 337,214 340,217 360,210 386,203 326,225 331,229 336,231 347,228 331,240 305,244 333,257 354,252 371,235 376,233 394,220 410,215 423,213 396,242 396,253 444,200 457,217 477,199 475,208 474,217 488,215 471,228 472,235 515,203 509,202 521,210 528,215 541,214 545,220 548,227 552,230 550,222 567,230 573,218 578,219 594,210 583,235 597,236 603,240 623,234 621,243 617,252 652,242 674,228 674,264 643,271 633,272 627,268 627,261 695,216 709,216 718,216 708,224 725,226 699,228 694,230 718,235 728,238 717,248 726,262 746,270 753,226 759,230 777,257 804,262 707,287 732,286 746,285 762,278 771,281 779,285 763,286 227,291 240,303 225,318 254,313 274,286 283,308 306,298 296,316 348,298 359,289 367,288 375,277 371,266 384,269 381,265 390,262 396,270 399,269 428,286 430,257 450,252 437,262 459,266 454,276 460,276 458,283 481,276 483,286 483,293 483,300 477,306 492,294 473,247 494,249 518,278 507,292 516,293 520,291 526,302 531,298 542,300 534,288 557,290 549,315 544,319 532,323 527,315 518,293 511,323 582,267 592,281 590,303 643,295 183,352 207,340 225,347 233,333 240,354 248,355 254,355 200,369 231,368 233,381 290,339 279,345 292,342 284,354 299,350 305,346 302,358 300,369 307,369 318,354 340,323 345,354 369,321 386,321 361,338 414,325 406,339 413,331 429,320 431,331 428,338 446,322 464,333 468,340 473,342 438,351 452,356 471,371 474,369 430,366 430,380 376,357 370,369 367,375 375,370 379,380 391,375 384,379 261,381 270,385 284,391 337,393 204,405 213,411 228,406 235,423 222,435 231,447 276,415 264,422 269,424 279,424 288,426 278,433 276,440 306,406 355,412 354,424 355,430 399,411 405,408 434,408 415,430 405,425 412,436 417,432 395,434 399,442 348,446 358,448 368,439 363,443 385,446 391,450 372,456 370,462 395,462 401,459 411,447 312,451 322,446 324,445 313,453 286,466 88,338 78,359 93,374 73,391 83,399 90,405 91,415 78,450 81,467 116,465 133,452 147,464 103,484 98,487 115,485 105,490 108,502 132,496 61,508 81,508 125,523 127,541 151,521 158,494 164,491 170,491 181,476 196,481 162,508 160,500 216,481 227,480 212,499 248,479 264,481 262,498 251,500 263,502 284,489 299,489 313,489 299,500 301,504 307,508 342,489 360,500 360,507 360,512 374,501 384,480 391,470 206,535 245,531 263,530 270,530 293,538 313,545 333,552 346,553 352,531 344,560 352,550 343,576 193,555 214,555 204,566 226,569 246,571 251,574 260,568 306,569 288,574 173,582 202,579 207,587 181,598 182,609 195,606 200,600 216,608 209,606 199,604 237,608 254,608 260,605 271,594 270,590 281,594 287,591 295,595 286,602 283,606 284,612 301,606 316,611 317,612 333,620 330,624 329,597 339,600 265,614 278,621 272,628 296,604 176,628 184,629 196,628 211,626 173,645 154,667 215,654 215,657 215,664 247,650 262,657 303,653 333,669 167,699 165,699 200,690 201,687 191,709 232,696 231,710 233,690 255,682 263,697 263,688 276,692 284,680 285,678 305,677 262,717 262,724 263,731 225,731 303,706 305,715 313,714 313,720 321,723 153,736 156,738 192,738 201,745 204,761 176,770 151,779 196,777 208,776 223,777 242,760 237,767 239,777 271,773 268,778 295,777 306,771`],
[1140,160,`137,42 354,47 70,66 94,64 100,64 102,65 131,69 157,79 83,97 88,95 92,107 104,89 133,89 134,88 191,88 264,78 172,110 214,118 246,107 253,114 248,121 233,130 173,137 278,132 330,112 327,125 305,142 209,148 206,147 221,153 186,154 236,148 247,149 257,142 255,154 344,151 348,159 385,154 412,156 427,142 432,167 97,163 109,166 97,176 129,174 134,169 171,174 204,166 198,184 257,174 286,171 313,171 326,171 343,171 340,174 300,186 416,172 409,188 415,189 421,190 468,188 491,188 532,198 56,190 75,196 86,201 110,200 118,201 122,201 110,208 144,201 169,206 131,205 51,217 71,219 76,230 91,225 104,244 226,205 246,207 250,207 255,205 286,205 310,205 346,203 371,206 317,219 324,226 352,228 422,211 393,230 400,231 411,228 446,235 271,233 248,244 193,230 178,233 209,238 205,241 193,250 211,244 228,244 227,250 213,248 227,258 249,255 237,271 240,273 254,294 175,282 200,289 220,298 141,250 152,260 132,257 134,263 119,294 121,293 134,278 136,286 24,262 39,274 3,283 175,320 32,298 54,301 305,242 322,244 342,252 348,262 345,260 376,252 379,259 380,262 270,262 301,267 293,278 286,286 292,290 290,303 331,302 336,301 360,274 362,267 366,279 361,284 352,277 362,295 367,289 382,279 405,274 388,304 407,298 368,309 374,310 360,315 361,321 356,324 336,334 376,342 427,259 440,269 451,273 461,267 459,278 463,281 453,286 466,292 479,289 470,293 456,304 457,316 508,225 519,235 521,240 521,247 537,225 562,240 586,239 588,255 544,256 544,264 558,267 565,267 544,276 570,284 561,286 552,284 547,292 520,286 541,300 508,311 540,313 522,327 519,327 539,328 551,327 535,348 574,340 576,341 578,342 251,344 251,354 229,364 270,359 270,368 263,371 255,377 264,383 272,379 278,378 284,372 290,378 295,378 301,381 263,390 256,393 286,392 290,393 299,402 307,404 313,409 312,410 201,378 247,411 288,438 273,446 375,367 373,375 369,379 368,385 362,390 367,391 383,391 405,372 410,347 438,374 431,380 428,387 424,396 465,384 477,367 473,360 480,383 492,387 488,391 479,371 539,363 544,365 532,376 547,387 554,402 574,404 579,386 580,386 592,363 585,370 584,372 592,371 601,376 640,411 660,418 409,421 410,424 424,426 400,432 397,433 403,452 402,455 437,428 462,421 462,435 459,440 422,469 429,477 449,469 493,445 512,459 518,465 528,464 542,464 564,452 547,487 606,411 596,412 599,413 591,421 585,426 607,421 593,441 594,445 620,440 611,449 602,450 606,463 588,466 591,456 591,468 616,466 626,457 631,463 639,466 632,474 628,487 619,487 614,494 605,499 605,506 597,514 638,526 625,540 628,539 627,555 647,557 321,466 319,469 341,459 347,469 350,470 358,481 361,485 308,490 310,493 310,499 347,494 338,499 345,502 360,506 374,499 379,500 378,509 326,513 333,512 325,523 334,521 341,520 344,529 333,531 337,536 345,532 354,541 338,549 349,545 360,548 383,523 374,553 374,565 376,573 373,566 374,590 368,598 366,602 349,608 393,593 410,552 409,551 414,554 425,562 412,582 410,584 438,579 440,586 434,588 444,593 432,594 438,593 441,595 457,505 468,495 474,499 456,506 483,516 498,497 507,506 520,510 489,528 485,532 495,530 503,516 508,521 512,526 511,521 519,519 499,540 495,540 503,541 512,539 508,529 530,531 516,550 514,555 526,551 512,560 522,560 506,569 503,575 505,577 525,573 532,566 521,583 554,509 574,518 551,540 553,567 545,582 553,587 545,590 536,593 544,599 538,601 547,602 569,599 569,617 514,611 544,611 588,565 593,590 635,584 635,608 661,608 681,580 681,593 685,614 706,604 715,590 710,625 704,624 702,624 674,636 457,616 466,626 428,628 441,642 447,650 471,650 357,635 363,637 369,635 361,644 357,650 359,659 367,654 375,645 373,658 383,646 391,650 402,645 397,647 375,656 425,645 542,648 574,653 598,644 606,665 628,645 656,653 718,653 687,665 706,669 674,680 660,687 659,688 352,677 367,677 370,688 350,698 369,691 368,698 370,705 370,712 373,722 376,717 372,719 350,730 391,679 399,680 402,682 405,678 409,686 400,686 412,684 442,680 464,682 396,711 405,718 430,709 374,748 410,750 496,714 527,706 523,712 524,716 539,704 542,701 555,702 543,678 536,684 541,688 556,678 577,670 579,699 603,694 632,709 564,738 547,744 550,750 503,752 508,751 502,760 527,765 542,774 557,770 576,772 591,736 598,726 594,733 606,759 608,761 346,772 341,780 339,787 356,784 338,790 416,772 402,778 398,782 404,784 412,784 388,791 385,793 378,792 430,794 483,796 492,803 498,805 503,804 506,807 513,805 522,800 516,814 508,818 502,824 511,841 527,836 540,828 553,818 550,813 560,811 556,804 569,807 570,804 562,817 559,823 564,825 554,833 579,796 578,824 603,804 611,800 602,802 585,843 593,840 601,842 611,836 598,841 323,846 296,884 279,908 310,921 269,932 276,936 365,909 372,911 369,910 405,914 405,940 514,872 558,865 562,873 560,877 581,863 563,899 576,898 588,905 517,916 218,983 229,982 229,990 236,990 243,984`],
[900,400,`91,15 95,18 134,18 141,26 165,10 203,4 200,11 249,2 255,3 264,3 116,50 143,40 138,53 136,60 142,58 151,61 128,65 123,64 116,72 110,77 94,62 94,90 151,72 152,80 154,85 152,88 153,62 165,60 182,40 180,48 178,56 190,50 196,57 198,53 202,58 212,54 196,67 201,67 205,66 209,71 195,79 196,75 237,62 241,60 248,59 243,70 243,73 277,67 275,71 282,73 273,78 271,82 171,103 173,108 171,115 200,107 199,115 199,119 188,121 171,122 150,123 124,130 124,145 175,145 213,121 218,120 221,131 212,133 209,135 237,115 239,121 235,123 241,124 238,131 261,130 276,130 284,130 281,131 202,160 112,168 105,178 104,180 173,173 173,178 175,183 175,189 210,167 209,189 217,177 232,170 237,170 237,175 232,183 241,184 226,184 249,185 258,186 258,155 266,153 281,145 275,166 286,157 290,160 298,157 300,157 310,163 324,173 328,175 256,200 268,210 291,218 309,216 322,207 322,216 334,204 326,205 331,209 346,207 354,220 338,236 363,237 164,201 171,201 177,201 175,205 192,214 136,210 130,213 131,220 135,217 248,223 249,230 88,231 90,236 119,242 150,242 187,242 208,242 138,265 151,277 170,297 194,298 175,310 175,317 198,321 273,248 281,262 280,273 267,277 276,275 278,281 288,280 286,289 253,288 253,294 253,299 266,295 271,297 274,301 270,307 268,309 263,309 282,324 300,301 311,264 317,264 315,268 320,262 325,260 330,258 319,248 333,270 322,286 327,283 350,262 368,267 387,254 386,262 393,258 402,267 386,272 395,267 371,288 369,291 369,302 316,328 322,325 328,321 340,317 350,313 358,314 363,315 361,334 357,349 368,357 341,350 341,355 402,323 419,316 390,343 417,357 428,345 424,355 431,362 430,366 423,374 401,378 406,376 385,372 417,380 422,380 436,380 432,379 439,290 453,322 455,325 460,333 461,342 462,346 232,335 235,337 243,341 245,352 252,351 254,361 263,364 263,359 275,366 298,353 297,357 299,363 337,363 341,370 338,379 334,382 342,379 356,382 331,397 337,397 359,407 334,415 340,427 345,431 347,429 363,436 380,453 395,395 392,409 415,400 413,393 425,390 437,400 439,402 441,419 438,425 424,438 430,440 433,443 460,373 465,380 468,386 470,391 497,373 498,375 498,380 497,400 502,353 521,353 541,345 536,370 552,352 556,354 561,354 516,423 521,426 522,424 524,427 534,410 541,407 545,409 551,412 560,416 568,420 572,426 572,430 560,393 566,393 571,391 577,388 575,395 575,400 586,386 594,386 597,389 601,382 605,380 598,394 606,393 616,388 615,395 594,400 605,402 599,404 609,406 619,402 583,365 608,372 639,382 661,397 655,402 640,409 647,413 652,422 640,424 676,424 616,382 683,385 676,388 692,382 704,370 707,377 709,374 719,363 735,363 750,365 764,368 766,380 753,378 745,385 742,390 745,397 741,402 735,406 715,386 710,391 722,387 731,388 696,391 709,397 712,401 721,397 771,424 747,441 745,443 719,425 718,438 707,442 709,440 725,447 486,436 490,440 492,445 502,447 500,453 508,459 475,451 477,457 481,465 473,468 469,467 474,466 458,461 454,462 456,465 455,475 468,478 474,481 453,488 490,492 475,496 484,497 488,495 443,509 460,526 489,530 494,526 502,522 516,521 520,519 524,516 522,485 523,487 541,505 543,460 543,469 548,465 559,450 564,475 593,449 597,442 600,447 608,437 616,438 603,454 600,459 599,461 631,446 634,458 639,465 634,468 636,467 611,438 673,471 682,447 696,451 678,466 680,467 687,469 690,468 683,473 688,476 673,483 682,481 692,482 700,479 709,485 711,486 672,492 679,491 684,487 689,494 673,498 695,499 698,503 574,485 583,485 583,490 586,489 591,486 597,483 591,480 608,485 584,496 591,497 599,505 617,512 639,496 639,508 642,513 655,507 668,505 550,525 556,539 567,551 573,549 573,556 569,561 578,560 582,555 584,568 577,572 585,573 597,578 575,590 607,548 620,542 634,531 634,558 705,534 709,541 707,542 673,543 685,549 690,565 682,561 686,572 702,562 695,568 781,492 759,519 810,536 866,529 903,643 844,707 472,550 481,578 503,566 496,573 494,580 520,562 521,574 534,565 532,579 540,580 541,583 530,590 522,586 521,591 495,590 506,596 508,600 513,601 519,612 521,616 535,611 545,624 549,627 557,615 557,618 561,623 563,646 565,645 575,644 584,645 586,606 596,610 591,642 597,641 597,633 603,628 608,628 611,618 616,616 614,609 622,605 619,595 627,593 625,577 640,589 635,602 627,606 636,610 648,604 654,597 652,591 650,582 660,574 665,579 659,585 675,582 675,590 681,581 685,575 700,582 713,584 729,588 731,585 634,620 638,618 642,621 649,614 650,622 655,627 662,623 665,632 659,634 648,634 638,637 634,627 626,624 627,635 641,647 656,643 675,642 684,631 684,617 697,619 707,618 718,608 719,628 716,634 746,612 746,610 747,614 743,643 784,661 681,658 678,655 684,648 715,651 652,655 652,660 657,664 641,665 631,664 626,658 585,663 589,664 587,680 604,674 614,673 619,673 622,675 628,678 630,683 635,687 641,679 655,679 668,675 672,677 684,674 682,671 690,677 706,665 717,667 727,666 728,673 726,680 735,672 740,675 742,680 748,677 752,678 756,686 757,690 760,675 766,676 770,672 675,692 686,695 690,698 698,697 612,703 577,705 578,710 589,725 594,724 596,723 598,727 938,263 941,265 946,266 951,271 956,269 964,262 872,316 869,328 874,332 880,331 885,334 890,336 986,217 989,212`],
[0,600,`437,261 452,264 463,267 460,269 495,268 508,263 518,265 527,270 540,265 550,270 555,266 571,265 583,266 596,267 623,260 661,270 783,260`]
];
let out = '';
for (const [x, y, pts] of tiles)
  for (const p of pts.split(' ')) {
    const [a, b] = p.split(',');
    out += `<circle cx="${(x + a / 3).toFixed(1)}" cy="${(y + b / 3).toFixed(1)}" r="2.9"/>`;
  }
document.getElementById('map').innerHTML =
  `<g fill="#6f9c6f" stroke="#263626" stroke-width=".9" stroke-opacity=".75">${out}</g>` +
  '<circle cx="1124" cy="388.700" r="132.400" fill="#d5fcc5" stroke="#4b5b48"/>';
```
